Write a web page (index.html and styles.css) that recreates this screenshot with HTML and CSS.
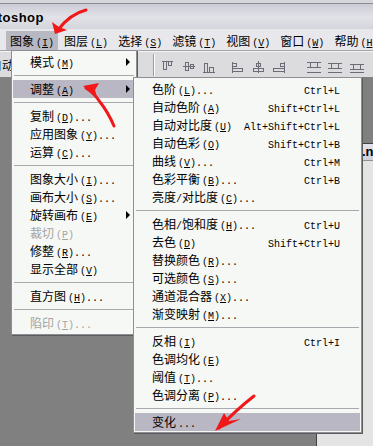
FILE: index.html
```html
<!DOCTYPE html>
<html lang="zh-CN">
<head>
    <meta charset="UTF-8">
    <title>Photoshop - 图象菜单</title>
    <link rel="stylesheet" href="styles.css">
</head>
<body>

    <div class="titlebar">
        <div class="clip-title"><span>Adobe Photoshop</span></div>
    </div>

    <div class="menubar">
        <div class="clip-edit"><span>编辑<span class="k">(<u>E</u>)</span></span></div>
        <div class="mb-item on">图象<span class="k">(<u>I</u>)</span></div>
        <div class="mb-item">图层<span class="k">(<u>L</u>)</span></div>
        <div class="mb-item">选择<span class="k">(<u>S</u>)</span></div>
        <div class="mb-item">滤镜<span class="k">(<u>T</u>)</span></div>
        <div class="mb-item">视图<span class="k">(<u>V</u>)</span></div>
        <div class="mb-item">窗口<span class="k">(<u>W</u>)</span></div>
        <div class="mb-item">帮助<span class="k">(<u>H</u>)</span></div>
    </div>

    <div class="toolbar">
        <div class="clip-tool"><span>自动</span></div>
        <div class="grip"></div>
        <div class="tb-sep"></div>
        <svg class="tb-icons" width="210" height="14" viewBox="0 0 210 14">
            <g fill="none" stroke="#6c6c78" stroke-width="1">
                <!-- 顶对齐 / 垂直居中 / 底对齐 -->
                <path d="M2 1.5h11"/><rect x="3.5" y="1.5" width="3" height="8"/><rect x="8.5" y="1.5" width="3" height="4"/>
                <path d="M23 6.5h12"/><rect x="25.5" y="2.5" width="3" height="8"/><rect x="30.5" y="4.5" width="3" height="4"/>
                <path d="M43 12.5h12"/><rect x="44.5" y="3.5" width="3" height="9"/><rect x="49.5" y="7.5" width="4" height="5"/>
                <!-- 左对齐 / 水平居中 / 右对齐 -->
                <path d="M72.5 2v11"/><rect x="72.5" y="3.5" width="4" height="3"/><rect x="72.5" y="8.5" width="10" height="3"/>
                <path d="M98.5 1v12"/><rect x="96.5" y="3.5" width="4" height="3"/><rect x="93.5" y="8.5" width="10" height="3"/>
                <path d="M124.5 2v11"/><rect x="120.5" y="3.5" width="4" height="3"/><rect x="113.5" y="8.5" width="11" height="3"/>
                <!-- 分布 -->
                <path d="M147 2.5h14M147 7.5h14"/><rect x="150.5" y="2.5" width="7" height="5"/><path d="M147 12.5h14"/>
                <path d="M168 3.5h14M168 8.5h14"/><rect x="171.5" y="3.5" width="7" height="5"/><path d="M168 12.5h14"/>
                <path d="M190 4.5h14M190 9.5h14"/><rect x="193.5" y="4.5" width="7" height="5"/><path d="M190 12.5h14"/>
            </g>
        </svg>
    </div>

    <div class="workspace"></div>

    <div class="docwin">
        <div class="doc-title">.n</div>
        <div class="doc-body"></div>
    </div>

    <!-- 图象 菜单 -->
    <div class="menu main-menu">
        <div class="item">模式<span class="k">(<u>M</u>)</span><span class="arrow"></span></div>
        <div class="sep"></div>
        <div class="item on">调整<span class="k">(<u>A</u>)</span><span class="arrow"></span></div>
        <div class="sep"></div>
        <div class="item">复制<span class="k">(<u>D</u>)...</span></div>
        <div class="item">应用图象<span class="k">(<u>Y</u>)...</span></div>
        <div class="item">运算<span class="k">(<u>C</u>)...</span></div>
        <div class="sep"></div>
        <div class="item">图象大小<span class="k">(<u>I</u>)...</span></div>
        <div class="item">画布大小<span class="k">(<u>S</u>)...</span></div>
        <div class="item">旋转画布<span class="k">(<u>E</u>)</span><span class="arrow"></span></div>
        <div class="item off">裁切<span class="k">(<u>P</u>)</span></div>
        <div class="item">修整<span class="k">(<u>R</u>)...</span></div>
        <div class="item">显示全部<span class="k">(<u>V</u>)</span></div>
        <div class="sep"></div>
        <div class="item">直方图<span class="k">(<u>H</u>)...</span></div>
        <div class="sep"></div>
        <div class="item off">陷印<span class="k">(<u>T</u>)...</span></div>
    </div>

    <!-- 调整 子菜单 -->
    <div class="menu sub-menu">
        <div class="item">色阶<span class="k">(<u>L</u>)...</span><span class="sc">Ctrl+L</span></div>
        <div class="item">自动色阶<span class="k">(<u>A</u>)</span><span class="sc">Shift+Ctrl+L</span></div>
        <div class="item">自动对比度<span class="k">(<u>U</u>)</span><span class="sc">Alt+Shift+Ctrl+L</span></div>
        <div class="item">自动色彩<span class="k">(<u>O</u>)</span><span class="sc">Shift+Ctrl+B</span></div>
        <div class="item">曲线<span class="k">(<u>V</u>)...</span><span class="sc">Ctrl+M</span></div>
        <div class="item">色彩平衡<span class="k">(<u>B</u>)...</span><span class="sc">Ctrl+B</span></div>
        <div class="item">亮度<span class="m">/</span>对比度<span class="k">(<u>C</u>)...</span></div>
        <div class="sep"></div>
        <div class="item">色相<span class="m">/</span>饱和度<span class="k">(<u>H</u>)...</span><span class="sc">Ctrl+U</span></div>
        <div class="item">去色<span class="k">(<u>D</u>)</span><span class="sc">Shift+Ctrl+U</span></div>
        <div class="item">替换颜色<span class="k">(<u>R</u>)...</span></div>
        <div class="item">可选颜色<span class="k">(<u>S</u>)...</span></div>
        <div class="item">通道混合器<span class="k">(<u>X</u>)...</span></div>
        <div class="item">渐变映射<span class="k">(<u>M</u>)...</span></div>
        <div class="sep"></div>
        <div class="item">反相<span class="k">(<u>I</u>)</span><span class="sc">Ctrl+I</span></div>
        <div class="item">色调均化<span class="k">(<u>E</u>)</span></div>
        <div class="item">阈值<span class="k">(<u>T</u>)...</span></div>
        <div class="item">色调分离<span class="k">(<u>P</u>)...</span></div>
        <div class="sep"></div>
        <div class="item on">变化<span class="k">...</span></div>
    </div>

    <!-- 红色手绘箭头 -->
    <svg class="marks" width="373" height="446" viewBox="0 0 373 446">
        <g fill="none" stroke="#f01818" stroke-width="3" stroke-linecap="round" stroke-linejoin="round">
            <path d="M86 10 Q70 14 58 30"/>
            <path d="M114 126 Q108 112 100 102 Q94 93 86 88"/>
            <path d="M254 396 Q236 410 219 428"/>
        </g>
        <g fill="#f01818">
            <polygon points="55,34 52,22 59,27 67,30"/>
            <polygon points="83,86 99,83 95,90 97,97"/>
            <polygon points="215,431 224,413 229,421 241,419"/>
        </g>
    </svg>

</body>
</html>
```

FILE: styles.css
```css
/* janela estilo Windows 2000 / Photoshop 7 */
* {
    box-sizing: border-box;
}
body {
    margin: 0;
    width: 373px;
    height: 446px;
    overflow: hidden;
    position: relative;
    display: flex;
    flex-direction: column;
    background-color: #808080;
    font-family: "Noto Sans CJK SC", "Noto Sans", sans-serif;
    font-size: 12px;
    color: #000;
}
.k, .m, .sc {
    font-family: "Liberation Mono", monospace;
    font-size: 10px;
}
.k {
    margin-left: 2px;
}

/* barra de titulo */
.titlebar {
    height: 29px;
    flex: none;
    border-top: 3px solid #d6d6da;
    box-shadow: inset 0 1px 0 #8c8c94;
    background: linear-gradient(#cacad4, #e2e2e8 55%, #d4d4dc);
    display: flex;
    align-items: center;
}
.clip-title {
    width: 44px;
    overflow: hidden;
    display: flex;
    justify-content: flex-end;
    white-space: nowrap;
    font-family: "Liberation Sans", sans-serif;
    font-weight: bold;
    font-size: 13px;
    letter-spacing: 0.5px;
    padding-top: 2px;
}

/* barra de menu */
.menubar {
    height: 22px;
    flex: none;
    background-color: #e8e8ec;
    border-bottom: 1px solid #a4a4a8;
    display: flex;
    gap: 2px;
    padding-top: 2px;
}
.clip-edit {
    width: 6px;
    margin-right: 4px;
    overflow: hidden;
    display: flex;
    justify-content: flex-end;
    white-space: nowrap;
    line-height: 19px;
}
.mb-item {
    height: 19px;
    line-height: 19px;
    padding: 0 4px;
    white-space: nowrap;
}
.mb-item.on {
    background-color: #b8b8c2;
}

/* barra de ferramentas */
.toolbar {
    height: 26px;
    flex: none;
    background-color: #dcdcde;
    border-top: 1px solid #f4f4f4;
    display: flex;
    align-items: center;
}
.clip-tool {
    width: 11px;
    overflow: hidden;
    white-space: nowrap;
}
.clip-tool span {
    display: block;
    margin-left: -10px;
}
.grip {
    margin-left: 126px;
    width: 2px;
    height: 16px;
    border-left: 1px dotted #707070;
}
.tb-sep {
    margin-left: 14px;
    width: 2px;
    height: 22px;
    border-left: 1px solid #9c9c9c;
    border-right: 1px solid #fff;
}
.tb-icons {
    margin-left: 5px;
    margin-top: 4px;
}

.workspace {
    flex: 1;
}

/* janela do documento */
.docwin {
    position: absolute;
    left: 316px;
    top: 143px;
    right: 0;
    bottom: 0;
    border-left: 1px solid #404040;
    border-top: 1px solid #404040;
    display: flex;
    flex-direction: column;
}
.doc-title {
    height: 17px;
    background: linear-gradient(#e4e4ec, #d0d0da);
    border-bottom: 1px solid #909090;
    padding-left: 45px;
    font-family: "Liberation Sans", sans-serif;
    font-weight: bold;
    font-size: 13px;
    line-height: 16px;
    white-space: nowrap;
    overflow: hidden;
}
.doc-body {
    flex: 1;
    background-color: #e4e4e4;
}

/* menus */
.menu {
    position: absolute;
    background-color: #f5f8f4;
    border: 1px solid #8e8e96;
    box-shadow: 1px 1px 0 #5c5c5c;
    padding: 2px 1px;
}
.main-menu {
    left: 11px;
    top: 50px;
    width: 126px;
}
.sub-menu {
    left: 133px;
    top: 77px;
    width: 229px;
    padding-bottom: 1px;
}
.item {
    height: 18px;
    line-height: 18px;
    padding-left: 17px;
    padding-right: 20px;
    display: flex;
    align-items: baseline;
    white-space: nowrap;
}
.main-menu .item {
    padding-right: 5px;
}
.item.on {
    background-color: #b9b7c3;
}
.item.off {
    color: #a4a4a4;
}
.item .sc {
    margin-left: auto;
}
.arrow {
    margin-left: auto;
    align-self: center;
    width: 0;
    height: 0;
    border-top: 4px solid transparent;
    border-bottom: 4px solid transparent;
    border-left: 4px solid #000;
}
.sep {
    height: 9px;
    position: relative;
}
.sep::after {
    content: "";
    position: absolute;
    left: 1px;
    right: 1px;
    top: 4px;
    border-top: 1px solid #a8a8ae;
}

/* anotacoes vermelhas */
.marks {
    position: absolute;
    left: 0;
    top: 0;
    pointer-events: none;
}
```
